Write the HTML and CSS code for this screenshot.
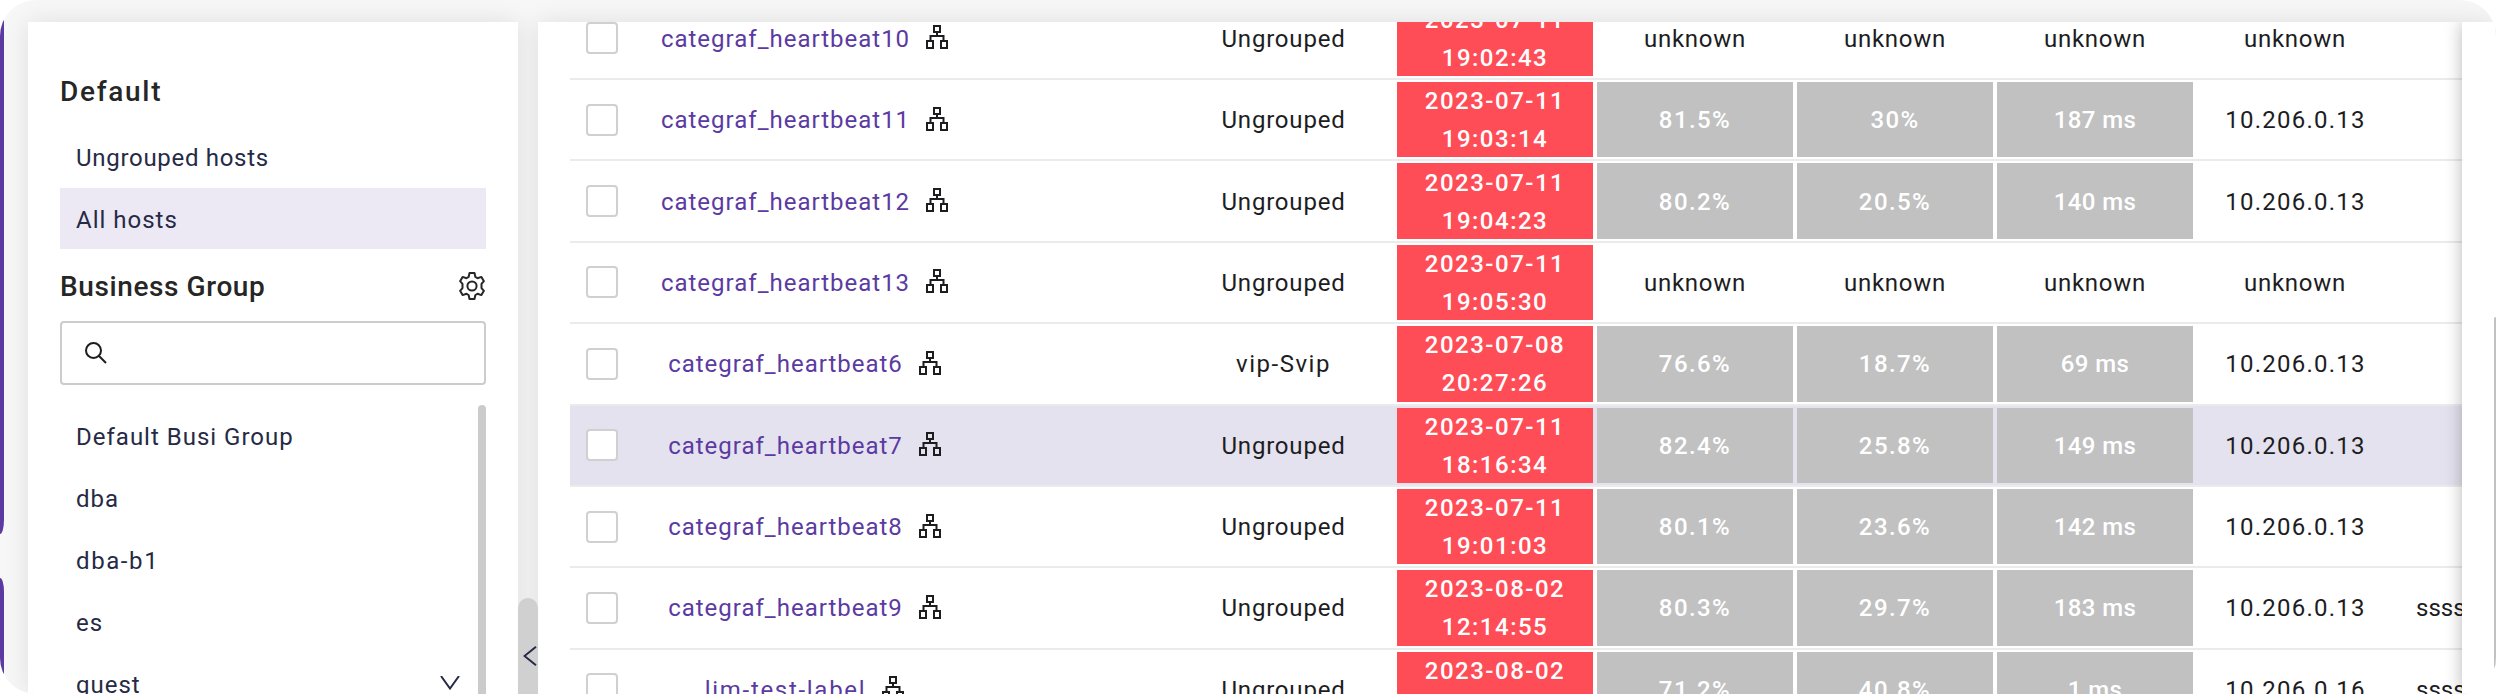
FILE: index.html
```
<!DOCTYPE html>
<html lang="en">
<head>
<meta charset="utf-8">
<title>Hosts</title>
<link rel="stylesheet" href="styles.css">
</head>
<body>
<svg class="defs" width="0" height="0">
  <symbol id="tree" viewBox="0 0 22 24">
    <path d="M8 1h6v6H8zM1 16h6v7H1zM15 16h6v7h-6zM11 7v4M4.500 16v-5h13v5" fill="none" stroke="currentColor" stroke-width="2"/>
  </symbol>
</svg>
<div class="frame">
  <nav class="rail"><div class="rail-item first"></div><div class="rail-item second"></div></nav>
  <aside class="sidebar">
    <h2 class="title wide">Default</h2>
    <ul class="list">
      <li class="item hosts">Ungrouped hosts</li>
      <li class="item selected">All hosts</li>
    </ul>
    <div class="group-head">
      <h2 class="title">Business Group</h2>
      <svg class="gear" viewBox="0 0 26 28" fill="none" stroke="currentColor" stroke-width="2" stroke-linejoin="round"><path d="M10.500 1h5l.9 4 2.100 1.200 3.900-1.300 2.500 4.300-2.400 2.700v4.200l2.400 2.700-2.500 4.300-3.900-1.300-2.100 1.200-.9 4h-5l-.9-4-2.100-1.200-3.900 1.300-2.500-4.300 2.400-2.700v-4.200l-2.400-2.700 2.500-4.300 3.900 1.300L9.600 5z"/><circle cx="13" cy="14" r="4.600"/></svg>
    </div>
    <div class="search">
      <svg width="22" height="22" viewBox="0 0 22 22" fill="none" stroke="#1d1d1f" stroke-width="2"><circle cx="8.500" cy="8.500" r="7.500"/><path d="M14 14l7 7"/></svg>
    </div>
    <div class="scroll">
      <ul class="list">
        <li class="item busi">Default Busi Group</li>
        <li class="item">dba</li>
        <li class="item b1">dba-b1</li>
        <li class="item">es</li>
        <li class="item">guest<svg class="down" width="20" height="14" viewBox="0 0 20 14" fill="none" stroke="currentColor" stroke-width="2"><path d="M1 0l9 12.500L19 0"/></svg></li>
      </ul>
      <div class="thumb"></div>
    </div>
  </aside>
  <div class="gutter"><div class="handle"><svg width="14" height="20" viewBox="0 0 14 20" fill="none" stroke="currentColor" stroke-width="2"><path d="M13 .8L1.500 10 13 19.200"/></svg></div></div>
  <main class="content">
    <div class="table">
      <div class="row"><span class="check"></span><div class="name"><a>categraf_heartbeat10</a><svg class="tree"><use href="#tree"/></svg></div><div></div><div class="grp">Ungrouped</div><div class="date"><span>2023-07-11</span><span class="time">19:02:43</span></div><div class="unk">unknown</div><div class="unk">unknown</div><div class="unk">unknown</div><div class="unk">unknown</div><div class="note"></div></div>
      <div class="row"><span class="check"></span><div class="name"><a>categraf_heartbeat11</a><svg class="tree"><use href="#tree"/></svg></div><div></div><div class="grp">Ungrouped</div><div class="date"><span>2023-07-11</span><span class="time">19:03:14</span></div><div class="val">81.5%</div><div class="val">30%</div><div class="val ms">187 ms</div><div class="ip">10.206.0.13</div><div class="note"></div></div>
      <div class="row"><span class="check"></span><div class="name"><a>categraf_heartbeat12</a><svg class="tree"><use href="#tree"/></svg></div><div></div><div class="grp">Ungrouped</div><div class="date"><span>2023-07-11</span><span class="time">19:04:23</span></div><div class="val">80.2%</div><div class="val">20.5%</div><div class="val ms">140 ms</div><div class="ip">10.206.0.13</div><div class="note"></div></div>
      <div class="row"><span class="check"></span><div class="name"><a>categraf_heartbeat13</a><svg class="tree"><use href="#tree"/></svg></div><div></div><div class="grp">Ungrouped</div><div class="date"><span>2023-07-11</span><span class="time">19:05:30</span></div><div class="unk">unknown</div><div class="unk">unknown</div><div class="unk">unknown</div><div class="unk">unknown</div><div class="note"></div></div>
      <div class="row"><span class="check"></span><div class="name"><a>categraf_heartbeat6</a><svg class="tree"><use href="#tree"/></svg></div><div></div><div class="grp vip">vip-Svip</div><div class="date"><span>2023-07-08</span><span class="time">20:27:26</span></div><div class="val">76.6%</div><div class="val">18.7%</div><div class="val ms">69 ms</div><div class="ip">10.206.0.13</div><div class="note"></div></div>
      <div class="row hover"><span class="check"></span><div class="name"><a>categraf_heartbeat7</a><svg class="tree"><use href="#tree"/></svg></div><div></div><div class="grp">Ungrouped</div><div class="date"><span>2023-07-11</span><span class="time">18:16:34</span></div><div class="val">82.4%</div><div class="val">25.8%</div><div class="val ms">149 ms</div><div class="ip">10.206.0.13</div><div class="note"></div></div>
      <div class="row"><span class="check"></span><div class="name"><a>categraf_heartbeat8</a><svg class="tree"><use href="#tree"/></svg></div><div></div><div class="grp">Ungrouped</div><div class="date"><span>2023-07-11</span><span class="time">19:01:03</span></div><div class="val">80.1%</div><div class="val">23.6%</div><div class="val ms">142 ms</div><div class="ip">10.206.0.13</div><div class="note"></div></div>
      <div class="row"><span class="check"></span><div class="name"><a>categraf_heartbeat9</a><svg class="tree"><use href="#tree"/></svg></div><div></div><div class="grp">Ungrouped</div><div class="date"><span>2023-08-02</span><span class="time">12:14:55</span></div><div class="val">80.3%</div><div class="val">29.7%</div><div class="val ms">183 ms</div><div class="ip">10.206.0.13</div><div class="note">ssss</div></div>
      <div class="row"><span class="check"></span><div class="name"><a class="lim">lim-test-label</a><svg class="tree"><use href="#tree"/></svg></div><div></div><div class="grp">Ungrouped</div><div class="date"><span>2023-08-02</span><span class="time">12:14:55</span></div><div class="val">71.2%</div><div class="val">40.8%</div><div class="val ms">1 ms</div><div class="ip">10.206.0.16</div><div class="note">ssss</div></div>
    </div>
    <div class="fixed"><div class="page-thumb"></div></div>
  </main>
</div>
</body>
</html>
```
FILE: styles.css
```
* { box-sizing: border-box; }
body { margin: 0; background: #fff; font: 24px/38px Roboto, "Liberation Sans", sans-serif; color: #1d1d1f; }
.defs { position: absolute; }
ul { list-style: none; margin: 0; padding: 0; }
h2 { margin: 0; }

.frame { display: flex; width: 2496px; height: 694px; border-radius: 36px; overflow: hidden; background: #f7f7f7; }

.rail { width: 28px; display: flex; flex-direction: column; gap: 44px; }
.rail-item { width: 4px; background: #5b3aa2; }
.rail-item.first { height: 534px; border-bottom-right-radius: 4px 14px; }
.rail-item.second { height: 116px; border-top-right-radius: 4px 14px; }

.sidebar { width: 490px; height: 672px; margin-top: 22px; padding: 48px 32px 0; background: #fff; box-shadow: 0 0 24px rgba(0,0,0,.1); display: flex; flex-direction: column; overflow: hidden; }
.title { font-size: 28px; line-height: 44px; font-weight: 500; letter-spacing: .6px; color: #262626; }
.title.wide { letter-spacing: 1.7px; margin-bottom: 12px; }
.item { display: flex; align-items: center; justify-content: space-between; height: 61px; margin-bottom: 1px; padding: 2px 0 0 16px; letter-spacing: 1px; color: #262a45; }
.item.hosts { letter-spacing: .7px; }
.item.b1 { letter-spacing: 1.6px; }
.selected { background: #ece9f5; }
.group-head { display: flex; justify-content: space-between; align-items: center; height: 44px; margin: 15px 0 12px; }
.gear { width: 26px; height: 28px; margin: -2px 1px 0 0; color: #262626; }
.search { height: 64px; flex: none; border: 2px solid #ccc; border-radius: 4px; padding: 19px 0 0 23px; line-height: 0; }
.scroll { display: flex; height: 309px; margin-top: 20px; overflow: hidden; }
.scroll .list { flex: 1; }
.thumb { width: 8px; height: 340px; border-radius: 4px; background: #cbcbcb; }
.down { margin-right: 18px; margin-top: -3px; }

.gutter { width: 20px; height: 672px; margin-top: 22px; padding-top: 576px; }
.handle { position: relative; z-index: 1; height: 120px; border-radius: 10px 10px 0 0; background: #d0d0d0; padding: 48px 0 0 5px; line-height: 0; color: #262a45; }

.content { display: flex; width: 1958px; height: 672px; margin-top: 22px; padding-left: 32px; background: #fff; box-shadow: 0 0 24px rgba(0,0,0,.1); overflow: hidden; }
.table { width: 1892px; flex: none; margin-top: -23.38px; overflow: hidden; height: 740px; }
.row { display: grid; grid-template-columns: 64px 341px 197px 223px 200px 200px 200px 200px 200px 67px; grid-template-rows: 79.38px; height: 81.38px; border-bottom: 2px solid #ebebeb; align-items: stretch; text-align: center; }
.row > div { display: flex; align-items: center; justify-content: center; padding-top: 1px; min-height: 0; }
.hover { background: #e4e2ee; }
.check { width: 32px; height: 32px; border: 2px solid #d0d0d0; border-radius: 4px; background: #fff; place-self: center; }
.row > .name { color: #5b3aa2; }
.name a { letter-spacing: 1px; }
.name a.lim { letter-spacing: 1.7px; }
.tree { width: 22px; height: 24px; margin: -3px 0 0 16px; color: #1d1d1f; }
.grp { letter-spacing: .8px; }
.grp.vip { letter-spacing: 1.5px; }
.unk { letter-spacing: .7px; }
.row > .ip { letter-spacing: 1.25px; padding-left: 1px; }
.row > .date { flex-direction: column; margin: 2px; background: #ff4d58; color: #fff; letter-spacing: 1.5px; font-weight: 500; }
.row > .val { margin: 2px; background: #c1c1c1; color: #fff; letter-spacing: 1.4px; font-weight: 500; }
.row > .val.ms { letter-spacing: .4px; }
.row > .note { justify-content: flex-start; padding-left: 21px; overflow: hidden; }
.fixed { position: relative; z-index: 1; width: 34px; height: 672px; background: #fff; box-shadow: 0 0 18px rgba(0,0,0,.28); display: flex; justify-content: flex-end; padding-top: 295px; }
.page-thumb { width: 2px; height: 352px; background: #c1c1c1; border-radius: 2px 0 0 2px; }
```
